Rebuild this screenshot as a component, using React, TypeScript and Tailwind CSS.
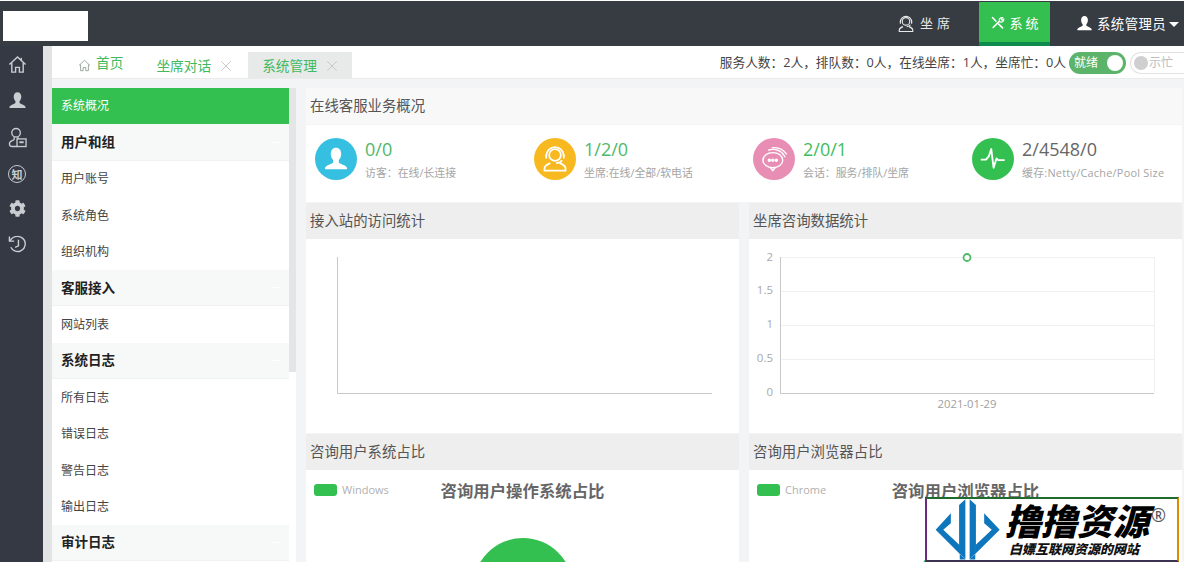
import React from "react";
import { X } from "lucide-react";
import { FaCog } from "react-icons/fa";

function UserSolid({ className }: { className?: string }) {
  return (
    <svg viewBox="0 0 24 24" className={className} fill="currentColor">
      <path d="M12 1.500c3 0 4.800 2.400 4.800 5.600 0 2.400-.9 4.600-2.200 5.900v1.900c0 1 3.400 2 5.400 3 1.600.8 2.200 1.600 2.200 3.600H1.800c0-2 .6-2.800 2.200-3.600 2-1 5.400-2 5.400-3V13c-1.300-1.300-2.200-3.500-2.200-5.900C7.200 3.900 9 1.500 12 1.500z" />
    </svg>
  );
}

function RailHome() {
  return (
    <svg viewBox="0 0 20 20" className="h-[19px] w-[19px]" fill="none" stroke="#c9ccd0" strokeWidth="1.500">
      <path d="M1.500 10 10 2l8.500 8" />
      <path d="M14 3v3" />
      <path d="M4 8.500V18h4v-5h4v5h4V8.500" />
    </svg>
  );
}

function RailRole() {
  return (
    <svg viewBox="0 0 20 22" className="h-[21px] w-[19px]" fill="none" stroke="#c9ccd0" strokeWidth="1.400">
      <circle cx="8.500" cy="6" r="4.500" />
      <path d="M6.500 10.500v2.500c0 1-5 1.500-5 4.500 0 2 1.500 3 3 3h5" />
      <path d="M10.500 10.500v2" />
      <rect x="9.500" y="12.500" width="9.500" height="8" />
      <path d="M12 16h4.500" strokeWidth="2" />
    </svg>
  );
}

function RailHistory() {
  return (
    <svg viewBox="0 0 20 20" className="h-[19px] w-[19px]" fill="none" stroke="#c9ccd0" strokeWidth="1.500">
      <path d="M1.500 2.500v5h5" />
      <path d="M2 7.500C4 4 6.500 2.500 10 2.500a8 8 0 1 1-7 11.500" />
      <path d="M11 6v6.500l-3.500 1.500" />
    </svg>
  );
}

function Agent({ className }: { className?: string }) {
  return (
    <svg viewBox="0 0 24 24" className={className} fill="none" stroke="currentColor" strokeWidth="1.500">
      <circle cx="12" cy="8.500" r="5" />
      <path d="M4.500 9.500C4.500 5 8 1.800 12 1.800S19.500 5 19.500 9.500" />
      <path d="M4.500 8v3.500M19.500 8v3.500M18 13c-1 1.500-3 2.500-5 2.500" />
      <path d="M8 15.500c-2.500 1-5 2-5 4.500v2h18v-2c0-2.500-2.500-3.500-5-4.500" />
    </svg>
  );
}

function Tools({ className }: { className?: string }) {
  return (
    <svg viewBox="0 0 24 24" className={className} fill="none" stroke="currentColor" strokeWidth="2.600" strokeLinecap="round">
      <path d="M5 20 14 11" />
      <path d="M15 10c-1-3 1-6 5-6l-2 3 1.500 1.500L22 6.500c.5 3.500-3 6-6 4.500" strokeWidth="1.800" />
      <path d="M4 4l5.500 6M14 14.500l6 6" />
    </svg>
  );
}

const menu: { label: string; kind: "active" | "group" | "item" }[] = [
  { label: "系统概况", kind: "active" },
  { label: "用户和组", kind: "group" },
  { label: "用户账号", kind: "item" },
  { label: "系统角色", kind: "item" },
  { label: "组织机构", kind: "item" },
  { label: "客服接入", kind: "group" },
  { label: "网站列表", kind: "item" },
  { label: "系统日志", kind: "group" },
  { label: "所有日志", kind: "item" },
  { label: "错误日志", kind: "item" },
  { label: "警告日志", kind: "item" },
  { label: "输出日志", kind: "item" },
  { label: "审计日志", kind: "group" },
];

function MenuRow({ label, kind }: { label: string; kind: string }) {
  if (kind === "active")
    return <div className="flex h-[36.4px] items-center bg-[#34c050] pl-[9px] text-[12px] text-white">{label}</div>;
  if (kind === "group")
    return (
      <div className="flex h-[36.4px] items-center justify-between border-b border-[#f0f1f2] bg-[#f7f8f8] pl-[9px] pr-[10px] text-[13.500px] font-bold text-[#222]">
        <span>{label}</span>
        <span className="h-[1px] w-[8px] bg-white" />
      </div>
    );
  return <div className="flex h-[36.4px] items-center bg-white pl-[9px] pt-[1px] text-[12px] text-[#444]">{label}</div>;
}

function Head({ children }: { children: React.ReactNode }) {
  return <div className="flex h-[36px] items-center bg-[#eeeeee] pl-[4px] text-[14.400px] text-[#555]">{children}</div>;
}

function Stat({
  bg,
  icon,
  value,
  sub,
  valueClass,
  subClass,
}: {
  bg: string;
  icon: React.ReactNode;
  value: string;
  sub: string;
  valueClass: string;
  subClass?: string;
}) {
  return (
    <div className="flex items-start gap-[8px] pl-[9px]">
      <div className={`flex h-[42px] w-[42px] shrink-0 items-center justify-center rounded-full text-white ${bg}`}>{icon}</div>
      <div className="flex flex-col">
        <div className={`-mt-[1px] text-[18px] leading-[24px] ${valueClass}`}>{value}</div>
        <div className={`mt-[4px] whitespace-nowrap text-[10.900px] leading-[16px] text-[#a5a5a5] ${subClass ?? ""}`}>{sub}</div>
      </div>
    </div>
  );
}

function LeftChart() {
  return (
    <svg viewBox="0 0 433 194" className="block h-[194px] w-full">
      <path d="M31.500 18V154.500H406" fill="none" stroke="#c8c8c8" strokeWidth="1" />
    </svg>
  );
}

function RightChart() {
  const ys = [18.500, 52.500, 86.500, 120.500];
  const labels = ["2", "1.5", "1", "0.5", "0"];
  return (
    <svg viewBox="0 0 433 194" className="block h-[194px] w-full">
      {ys.map((y) => (
        <path key={y} d={`M31 ${y}H405`} stroke="#f0f0f0" strokeWidth="1" />
      ))}
      <path d="M405.500 18V154" stroke="#f0f0f0" strokeWidth="1" />
      <path d="M31.500 18V154.500H405" fill="none" stroke="#c8c8c8" strokeWidth="1" />
      {labels.map((l, i) => (
        <text key={l} x="24" y={21.500 + i * 33.800} textAnchor="end" fontSize="11.500" fill="#a8a8a8" fontFamily="'Open Sans', sans-serif">
          {l}
        </text>
      ))}
      <circle cx="218" cy="18.500" r="3.500" fill="#fff" stroke="#4cb963" strokeWidth="1.800" />
      <text x="218" y="169" textAnchor="middle" fontSize="11.300" fill="#a0a0a0" fontFamily="'Open Sans', sans-serif">
        2021-01-29
      </text>
    </svg>
  );
}

function PieCard({ legend, title }: { legend: string; title: string }) {
  return (
    <div className="flex h-[92px] flex-col overflow-hidden bg-white">
      <div className="grid grid-cols-[1fr_auto_1fr]">
        <div className="flex items-center gap-[5px] self-start pl-[8px] pt-[13px]">
          <span className="h-[12px] w-[23px] rounded-[3px] bg-[#34c050]" />
          <span className="text-[11px] leading-[13px] text-[#b0b0b0]">{legend}</span>
        </div>
        <div className="pt-[9px] text-[16.400px] font-bold leading-[24px] text-[#666]">{title}</div>
        <div />
      </div>
      <div className="mx-auto mt-[35px] h-[100px] w-[100px] shrink-0 rounded-full bg-[#34c050]" />
    </div>
  );
}

function Watermark() {
  return (
    <div className="absolute left-[925px] top-[497px] flex h-[65px] w-[254px] items-center border-2 border-t-[#1f6b2e] border-r-[#e08c00] border-b-[#3c3350] border-l-[#6a2a80] bg-white">
      <svg viewBox="30 12 200 184" className="ml-[8px] h-[61px] w-[66px] shrink-0" fill="#0e76bc">
        <path d="M32 105 78 55v30L55 105l50 47v43h17z" />
        <path d="M103 30 122 12v183l-19-20z" />
        <path d="M154 30 135 12v183l19-20z" />
        <path d="M226 105 179 55v30l23 20-50 47v43h-17z" />
      </svg>
      <div className="ml-[4px] flex flex-col">
        <div className="flex items-start">
          <span className="text-[36px] font-black italic leading-[38px] text-black">撸撸资源</span>
          <span className="ml-[2px] text-[18px] leading-[24px] text-[#555]">®</span>
        </div>
        <span className="pl-[4px] text-[13px] font-black italic leading-[16px] text-[#111]">白嫖互联网资源的网站</span>
      </div>
    </div>
  );
}

export default function App() {
  return (
    <div
      className="relative flex h-[562px] w-[1184px] flex-col overflow-hidden bg-white"
      style={{ fontFamily: "'Open Sans','Noto Sans CJK SC',sans-serif" }}
    >
      {/* top bar */}
      <header className="mt-[1px] flex h-[45px] shrink-0 items-stretch bg-[#373c43]">
        <div className="ml-[3px] mt-[10px] h-[30px] w-[85px] bg-white" />
        <div className="ml-auto flex items-center gap-[5px] pr-[25px] text-[#e8e8e8]">
          <Agent className="h-[18px] w-[18px]" />
          <span className="text-[13px] tracking-[4px]">坐席</span>
        </div>
        <div className="mt-[1px] flex w-[71px] items-center justify-center gap-[5px] border-b-4 border-[#0d8a4e] bg-[#34c050] pl-[2px] pt-[4px] text-white">
          <Tools className="-mt-[3px] h-[15px] w-[15px]" />
          <span className="text-[13px] tracking-[3px]">系统</span>
        </div>
        <div className="ml-[26px] flex items-center pr-[5px] pt-[2px] text-white">
          <UserSolid className="-mt-[3px] h-[17px] w-[17px]" />
          <span className="ml-[4px] text-[13.400px] tracking-[0.4px]">系统管理员</span>
          <span className="ml-[3px] h-0 w-0 border-x-[5px] border-t-[5px] border-x-transparent border-t-white" />
        </div>
      </header>

      <div className="flex min-h-0 flex-1">
        {/* rail */}
        <nav className="flex w-[43px] shrink-0 flex-col items-center gap-[17px] bg-[#343944] pr-[9px] pt-[9px] text-[#c9ccd0]">
          <RailHome />
          <UserSolid className="h-[19px] w-[19px]" />
          <RailRole />
          <span className="flex h-[18px] w-[18px] items-center justify-center rounded-full border border-[#c9ccd0] text-[11px] font-bold leading-none">知</span>
          <FaCog className="h-[17px] w-[17px]" />
          <RailHistory />
        </nav>
        <div className="w-[9px] shrink-0 bg-[#e1e3e5]" />

        <div className="flex min-w-0 flex-1 flex-col">
          {/* tabs */}
          <div className="flex h-[33px] shrink-0 items-end border-b border-[#ebebeb] bg-white">
            <div className="flex h-[32px] items-center gap-[5px] pl-[26px] pt-[7px] text-[13.700px] text-[#42b95e]">
              <svg viewBox="0 0 20 20" className="h-[13px] w-[13px] text-[#8a9a90]" fill="none" stroke="currentColor" strokeWidth="1.300">
                <path d="M1.500 10 10 2l8.500 8" />
                <path d="M4 8.500V18h4v-5h4v5h4V8.500" />
              </svg>
              <span className="-mt-[4px]">首页</span>
            </div>
            <div className="ml-[33px] flex h-[32px] items-center gap-[6px] pt-[8px] text-[13.700px] text-[#42b95e]">
              <span>坐席对话</span>
              <X className="h-[18px] w-[18px] text-[#c4c4c4]" strokeWidth={1.200} />
            </div>
            <div className="ml-[13px] flex h-[26px] w-[104px] items-center gap-[6px] bg-[#e8e9e9] pl-[14px] pt-[2px] text-[13.700px] text-[#42b95e]">
              <span>系统管理</span>
              <X className="h-[18px] w-[18px] text-[#c4c4c4]" strokeWidth={1.200} />
            </div>
            <div className="ml-auto flex h-[32px] items-center pt-[2px]">
              <span className="whitespace-nowrap text-[12.700px] text-[#444]">服务人数：2人，排队数：0人，在线坐席：1人，坐席忙：0人</span>
              <div className="ml-[3px] flex h-[22px] w-[57px] items-center justify-between rounded-full bg-[#5cb46a] pl-[5px] pr-[3px] text-[12px] text-white">
                <span>就绪</span>
                <span className="h-[16px] w-[16px] rounded-full bg-white" />
              </div>
              <div className="ml-[4px] flex h-[22px] w-[54px] items-center gap-[1px] rounded-l-full border border-r-0 border-[#e2e2e2] pl-[3px] text-[12px] text-[#bdbdbd]">
                <span className="h-[14px] w-[14px] rounded-full bg-[#cfcfcf]" />
                <span>示忙</span>
              </div>
            </div>
          </div>

          {/* body */}
          <div className="flex min-h-0 flex-1 bg-[#f3f4f5] pt-[9px]">
            <aside className="flex w-[237px] shrink-0 flex-col overflow-hidden bg-white">
              {menu.map((m) => (
                <MenuRow key={m.label} label={m.label} kind={m.kind} />
              ))}
            </aside>
            <div className="flex w-[7px] shrink-0 flex-col bg-white">
              <div className="h-[284px] bg-[#e4e5e6]" />
            </div>
            <main className="ml-[10px] mr-[2px] flex min-w-0 flex-1 flex-col gap-[1px]">
              <div className="flex h-[36px] shrink-0 items-center bg-[#f8f8f8] pl-[4px] text-[14.400px] text-[#555]">在线客服业务概况</div>
              <div className="grid h-[77px] shrink-0 grid-cols-4 bg-white pt-[13px]">
                <Stat bg="bg-[#35bfe0]" icon={<UserSolid className="h-[26px] w-[26px]" />} value="0/0" sub="访客：在线/长连接" valueClass="text-[#4fb86a]" />
                <Stat bg="bg-[#f8b81f]" icon={<Agent className="h-[28px] w-[28px]" />} value="1/2/0" sub="坐席:在线/全部/软电话" valueClass="text-[#4fb86a]" />
                <Stat
                  bg="bg-[#e88db3]"
                  icon={
                    <svg viewBox="0 0 24 24" className="h-[28px] w-[28px]" fill="none" stroke="currentColor" strokeWidth="1.200">
                      <ellipse cx="11" cy="13" rx="8.500" ry="6.500" />
                      <path d="M9 19.500l2 2.500 2-2.500" />
                      <path d="M7 4.500c5-2 12 0 14.500 6M10 2.500c5-1 10 1.500 13 5.500" />
                      <circle cx="8" cy="13" r=".9" fill="currentColor" />
                      <circle cx="11" cy="13" r=".9" fill="currentColor" />
                      <circle cx="14" cy="13" r=".9" fill="currentColor" />
                    </svg>
                  }
                  value="2/0/1"
                  sub="会话：服务/排队/坐席"
                  valueClass="text-[#3fbd5a]"
                />
                <Stat
                  bg="bg-[#34c050]"
                  icon={
                    <svg viewBox="0 0 24 24" className="h-[28px] w-[28px]" fill="none" stroke="currentColor" strokeWidth="1.600" strokeLinejoin="round">
                      <path d="M1.500 12.500H6l2.500-3 2-6 2 16 2.500-8 1.500 1.500H22" />
                    </svg>
                  }
                  value="2/4548/0"
                  sub="缓存:Netty/Cache/Pool Size"
                  valueClass="text-[#666]"
                  subClass="tracking-[0.25px]"
                />
              </div>
              <div className="grid min-h-0 flex-1 grid-cols-[433px_433px] content-start gap-x-[10px]">
                <div className="flex flex-col">
                  <Head>接入站的访问统计</Head>
                  <div className="bg-white"><LeftChart /></div>
                  <div className="mt-[1px]"><Head>咨询用户系统占比</Head></div>
                  <PieCard legend="Windows" title="咨询用户操作系统占比" />
                </div>
                <div className="flex flex-col">
                  <Head>坐席咨询数据统计</Head>
                  <div className="bg-white"><RightChart /></div>
                  <div className="mt-[1px]"><Head>咨询用户浏览器占比</Head></div>
                  <PieCard legend="Chrome" title="咨询用户浏览器占比" />
                </div>
              </div>
            </main>
          </div>
        </div>
      </div>
      <Watermark />
    </div>
  );
}
